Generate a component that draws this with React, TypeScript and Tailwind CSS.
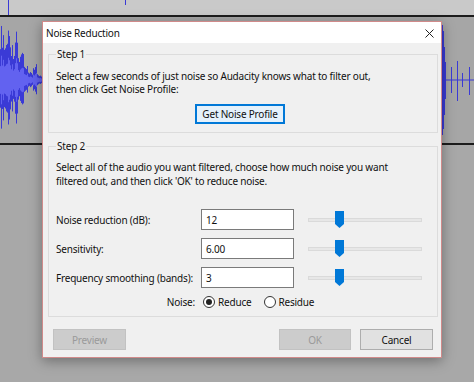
// Noise Reduction dialog over an Audacity track view

const waveColor = '#3a3ad6';

// deterministic amplitude for the left waveform
function leftAmp(x: number) {
  const env =
    x < 4 ? 56 : x < 7 ? 42 : x < 11 ? 58 : x < 15 ? 38 : x < 18 ? 50 : x < 21 ? 26 : x < 24 ? 32 : x < 28 ? 14 : x < 33 ? 8 : x < 37 ? 16 : 6;
  const r = Math.abs(Math.sin(x * 12.9898) * 43758.5453) % 1;
  return env * (0.55 + 0.45 * r);
}

function TrackWave() {
  const xs = Array.from({ length: 43 }, (_, i) => i);
  return (
    <svg width="474" height="126" className="block">
      <line x1="0" y1="63" x2="43" y2="63" stroke={waveColor} strokeWidth="1" />
      {xs.map(x => {
        const a = leftAmp(x);
        return <line key={x} x1={x + 0.5} y1={63 - a} x2={x + 0.5} y2={63 + a * 0.9} stroke={waveColor} strokeWidth="1" />;
      })}
      {xs.map(x => {
        const a = leftAmp(x) * 0.45;
        return <line key={'i' + x} x1={x + 0.5} y1={63 - a} x2={x + 0.5} y2={63 + a} stroke="#6262f0" strokeWidth="1" />;
      })}
      {/* right side */}
      <line x1="442.5" y1="8" x2="442.5" y2="118" stroke={waveColor} strokeWidth="1" />
      <line x1="443.5" y1="14" x2="443.5" y2="112" stroke={waveColor} strokeWidth="1" />
      <line x1="444.5" y1="30" x2="444.5" y2="98" stroke={waveColor} strokeWidth="1" />
      <line x1="445.5" y1="45" x2="445.5" y2="82" stroke={waveColor} strokeWidth="1" />
      <line x1="446" y1="63" x2="474" y2="63" stroke={waveColor} strokeWidth="1" />
      <line x1="451.5" y1="50" x2="451.5" y2="76" stroke={waveColor} strokeWidth="1" />
      <line x1="457.5" y1="44" x2="457.5" y2="84" stroke={waveColor} strokeWidth="1" />
      <line x1="462.5" y1="56" x2="462.5" y2="70" stroke={waveColor} strokeWidth="1" />
      <line x1="469.5" y1="50" x2="469.5" y2="78" stroke={waveColor} strokeWidth="1" />
    </svg>
  );
}

function Slider() {
  return (
    <div className="relative w-[114px] h-[19px] flex items-center">
      <div className="w-full h-[4px] bg-[#e7e7e7] border border-[#dadada]" />
      <svg width="9" height="17" className="absolute left-[27px] top-[1px]">
        <path d="M0 0 H9 V13 L4.5 17 L0 13 Z" fill="#0078d7" />
      </svg>
    </div>
  );
}

function Row({ label, value }: { label: string; value: string }) {
  return (
    <div className="flex items-center h-[21px]">
      <div className="w-[145px]">{label}</div>
      <div className="w-[93px] h-[21px] bg-white border border-[#7a7a7a] pl-[4px] flex items-center">{value}</div>
      <div className="ml-[14px]">
        <Slider />
      </div>
    </div>
  );
}

export default function App() {
  return (
    <div className="relative w-[474px] h-[382px] overflow-hidden bg-[#a8a8a8] font-['Noto_Sans',sans-serif]">
      {/* Tracks behind the dialog */}
      <div className="relative h-[15px] bg-[#c9c9c9]">
        <svg width="474" height="15" className="block">
          <line x1="8.5" y1="0" x2="8.5" y2="15" stroke={waveColor} />
          <line x1="125.5" y1="0" x2="125.5" y2="5" stroke={waveColor} />
        </svg>
      </div>
      <div className="h-[2px] bg-[#1c1c1c]" />
      <div className="h-[126px] bg-[#a6a6a6]">
        <TrackWave />
      </div>
      <div className="h-[2px] bg-[#1c1c1c]" />

      {/* Dialog window */}
      <div className="absolute left-[42px] top-[21px] w-[400px] h-[337px] border border-[#d08a8a] bg-[#f0f0f0] shadow-[0_3px_12px_rgba(0,0,0,0.35)] flex flex-col text-[10px] leading-[14px] tracking-[-0.2px] text-[#111]">
        <div className="h-[21px] bg-white flex items-center justify-between pl-[3px] pr-[7px]">
          <span className="text-[10px]">Noise Reduction</span>
          <svg width="9" height="9" viewBox="0 0 9 9" className="mt-[1px]">
            <path d="M0.5 0.5 L8.5 8.5 M8.5 0.5 L0.5 8.5" stroke="#222" strokeWidth="1" />
          </svg>
        </div>

        <div className="flex flex-col pl-[5px] pr-[3px] pt-[4px]">
          <fieldset className="border border-[#dcdcdc] px-[7px] pb-[8px]">
            <legend className="px-[1px]">Step 1</legend>
            <div className="mt-[9px] leading-[13px]">
              Select a few seconds of just noise so Audacity knows what to filter out,
              <br />
              then click Get Noise Profile:
            </div>
            <div className="mt-[8px] flex justify-center">
              <button className="ml-[-6px] w-[90px] h-[20px] bg-[#e5f1fb] border-2 border-[#0078d7] text-[10px] tracking-[-0.2px]">
                Get Noise Profile
              </button>
            </div>
          </fieldset>

          <fieldset className="mt-[6px] border border-[#dcdcdc] px-[7px] pb-[4px]">
            <legend className="px-[1px]">Step 2</legend>
            <div className="mt-[7px]">
              Select all of the audio you want filtered, choose how much noise you want
              <br />
              filtered out, and then click 'OK' to reduce noise.
            </div>
            <div className="mt-[21px] flex flex-col gap-[8px]">
              <Row label="Noise reduction (dB):" value="12" />
              <Row label="Sensitivity:" value="6.00" />
              <Row label="Frequency smoothing (bands):" value="3" />
            </div>
            <div className="mt-[4px] flex items-center h-[20px]">
              <div className="w-[139px] text-right">Noise:</div>
              <div className="ml-[8px] flex items-center gap-[3px]">
                <span className="w-[12px] h-[12px] rounded-full border border-[#333] bg-white flex items-center justify-center">
                  <span className="w-[6px] h-[6px] rounded-full bg-[#222]" />
                </span>
                <span>Reduce</span>
              </div>
              <div className="ml-[13px] flex items-center gap-[2px]">
                <span className="w-[12px] h-[12px] rounded-full border border-[#333] bg-white" />
                <span>Residue</span>
              </div>
            </div>
          </fieldset>
        </div>

        <div className="mt-[12px] flex items-center px-[10px] pr-[8px]">
          <button className="w-[73px] h-[21px] bg-[#cccccc] border border-[#c2c2c2] text-[#9a9a9a]">Preview</button>
          <div className="flex-1" />
          <button className="w-[72px] h-[21px] bg-[#cccccc] border border-[#c2c2c2] text-[#9a9a9a]">OK</button>
          <button className="ml-[9px] w-[73px] h-[21px] bg-[#e1e1e1] border border-[#adadad]">Cancel</button>
        </div>
      </div>
    </div>
  );
}
